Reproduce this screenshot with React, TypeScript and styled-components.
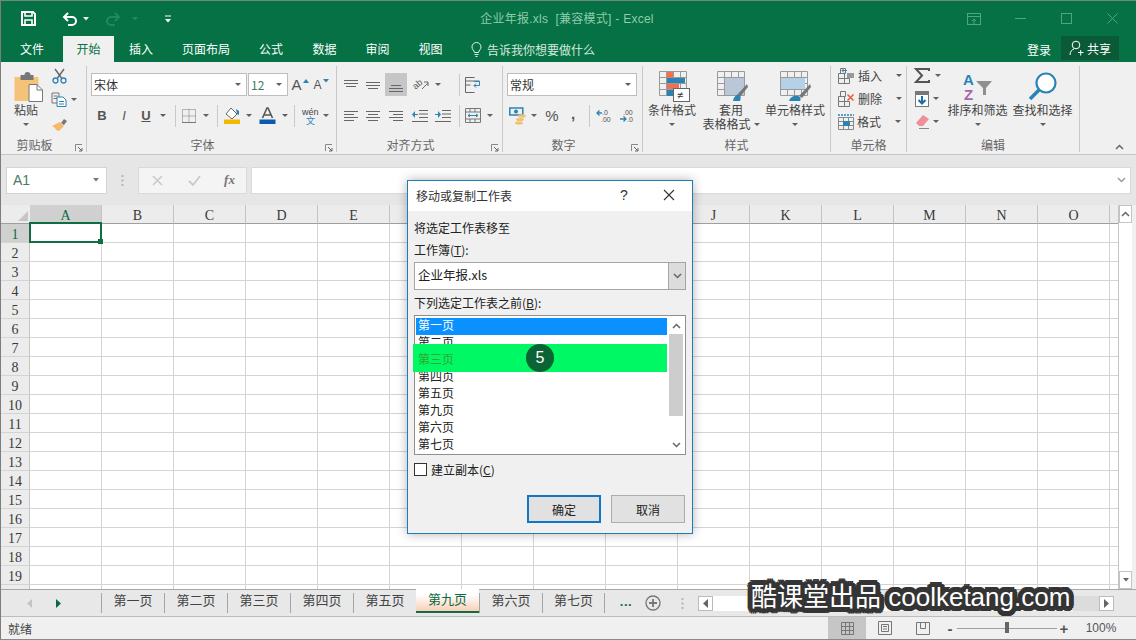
import { Fragment } from 'react';
import type { ReactNode } from 'react';
import styled, { createGlobalStyle } from 'styled-components';

const GlobalStyle = createGlobalStyle`
  html, body {
    margin: 0;
    padding: 0;
    overflow: hidden;
    background: #f0f0f0;
  }
  * { box-sizing: border-box; }
`;

const CJK = `"Noto Sans CJK SC", "Liberation Sans", sans-serif`;
const GREEN = '#057144';

const Window = styled.div`
  position: relative;
  width: 1136px;
  height: 640px;
  display: flex;
  flex-direction: column;
  overflow: hidden;
  font-family: ${CJK};
  font-size: 12px;
  color: #333;
  border-left: 1px solid #7d7d7d;
  border-bottom: 1px solid #8a8a8a;
`;

/* title bar */
const TitleBar = styled.div`
  height: 36px;
  flex: none;
  background: ${GREEN};
  border-top: 1px solid #6f8a7c;
  display: grid;
  grid-template-columns: 300px 1fr 300px;
  align-items: center;
`;
const QuickBar = styled.div`
  display: flex;
  align-items: center;
  padding-left: 19px;
`;
const QuickSlot = styled.span<{ $w: number }>`
  width: ${(p) => p.$w}px;
  display: flex;
  justify-content: center;
  align-items: center;
`;
const Title = styled.div`
  text-align: center;
  color: #8fcbab;
  font-size: 12px;
  padding: 0 3px 2px 0;
  white-space: pre;
  font-family: "Liberation Sans", ${CJK};
  letter-spacing: 0.26px;
`;
const WindowButtons = styled.div`
  display: flex;
  justify-content: flex-end;
  padding-right: 1px;
`;
const WindowButton = styled.span`
  width: 46px;
  display: flex;
  justify-content: center;
  align-items: center;
`;

/* tabs */
const TabBar = styled.div`
  height: 26px;
  flex: none;
  background: ${GREEN};
  display: flex;
  align-items: stretch;
`;
const Tab = styled.div<{ $w: number; $active?: boolean }>`
  width: ${(p) => p.$w}px;
  display: flex;
  align-items: center;
  justify-content: center;
  font-size: 12px;
  padding-bottom: 1px;
  color: ${(p) => (p.$active ? GREEN : '#ffffff')};
  background: ${(p) => (p.$active ? '#f0f0f0' : 'transparent')};
`;
const TellMe = styled.div`
  display: flex;
  align-items: center;
  gap: 5px;
  margin-left: 14px;
  color: #d5eadf;
  font-size: 12px;
`;
const TabSpacer = styled.div`
  flex: 1;
`;
const Login = styled.div`
  display: flex;
  align-items: center;
  color: #fff;
  margin-right: 10px;
`;
const ShareButton = styled.div`
  width: 58px;
  height: 24px;
  margin-right: 17px;
  background: #0b5a37;
  color: #fff;
  display: flex;
  align-items: center;
  justify-content: center;
  gap: 3px;
`;

/* ribbon */
const Ribbon = styled.div`
  height: 93px;
  flex: none;
  background: #f0f0f0;
  border-bottom: 1px solid #c6c6c6;
  display: flex;
  padding: 4px 0 2px;
`;
const Group = styled.div<{ $w: number; $plain?: boolean }>`
  position: relative;
  width: ${(p) => p.$w}px;
  flex: none;
  display: flex;
  flex-direction: column;
  border-right: ${(p) => (p.$plain ? 'none' : '1px solid #c9c9c9')};
`;
const GroupBody = styled.div<{ $pad?: number }>`
  height: 72px;
  display: flex;
  padding-left: ${(p) => p.$pad ?? 0}px;
`;
const Stack = styled.div`
  display: flex;
  flex-direction: column;
  gap: 8px;
  padding-top: 7px;
`;
const GroupLabel = styled.div<{ $launch?: boolean }>`
  height: 14px;
  line-height: 14px;
  text-align: center;
  color: #666;
  font-size: 12px;
  padding-right: ${(p) => (p.$launch ? 18 : 0)}px;
`;
const Launcher = styled.span`
  position: absolute;
  right: 3px;
  bottom: 0;
  display: flex;
`;
const ToolRow = styled.div`
  height: 23px;
  display: flex;
  align-items: center;
`;
const Slot = styled.span<{ $w: number; $on?: boolean }>`
  width: ${(p) => p.$w}px;
  height: 23px;
  flex: none;
  display: flex;
  align-items: center;
  justify-content: center;
  background: ${(p) => (p.$on ? '#c6c6c6' : 'transparent')};
`;
const Spacer = styled.span<{ $w: number }>`
  width: ${(p) => p.$w}px;
  flex: none;
`;
const VRule = styled.span`
  width: 1px;
  height: 22px;
  flex: none;
  background: #c9c9c9;
`;
const Caret = styled.span<{ $w?: number }>`
  width: ${(p) => p.$w ?? 6}px;
  flex: none;
  display: flex;
  justify-content: center;
  &::after {
    content: '';
    border: 3px solid transparent;
    border-top-color: #5f5f5f;
    border-bottom: none;
  }
`;
const Combo = styled.div<{ $w: number }>`
  width: ${(p) => p.$w}px;
  height: 23px;
  flex: none;
  background: #fff;
  border: 1px solid #bdbdbd;
  display: flex;
  align-items: center;
  justify-content: space-between;
  padding: 0 5px 1px 2px;
  font-size: 12px;
  color: #333;
  margin-right: 1px;
`;
const ComboValue = styled.span<{ $green?: boolean }>`
  color: ${(p) => (p.$green ? '#3c7a5c' : '#333')};
`;
const GlyphA = styled.span<{ $size: number }>`
  font-family: "Liberation Sans", sans-serif;
  font-size: ${(p) => p.$size}px;
  color: #555;
`;
const TriMark = styled.span`
  display: flex;
  align-self: flex-start;
  margin: 6px 0 0 1px;
`;
const FontBtn = styled.span<{ $under?: boolean; $italic?: boolean }>`
  font-family: "Liberation Sans", sans-serif;
  font-size: 13px;
  font-weight: ${(p) => (p.$italic ? 400 : 700)};
  font-style: ${(p) => (p.$italic ? 'italic' : 'normal')};
  text-decoration: ${(p) => (p.$under ? 'underline' : 'none')};
  color: #555;
`;
const BigButton = styled.div<{ $w: number }>`
  width: ${(p) => p.$w}px;
  flex: none;
  display: flex;
  flex-direction: column;
  align-items: center;
  padding-top: 4px;
  color: #444;
`;
const BigIcon = styled.div<{ $shift?: number }>`
  height: 33px;
  display: flex;
  align-items: center;
  justify-content: center;
  margin-left: ${(p) => p.$shift ?? 0}px;
`;
const BigText = styled.div`
  height: 14px;
  line-height: 14px;
  white-space: nowrap;
  display: flex;
  align-items: center;
  gap: 3px;
  font-size: 12px;
`;
const CaretLine = styled.div`
  height: 14px;
  display: flex;
  align-items: center;
`;
const ClipColumn = styled.div`
  display: flex;
  flex-direction: column;
  gap: 1px;
  margin-top: -2px;
`;
const CellColumn = styled.div<{ $pad?: number }>`
  display: flex;
  flex-direction: column;
  margin-top: -2px;
  padding-left: ${(p) => p.$pad ?? 0}px;
`;
const CellLabel = styled.span`
  margin-left: 3px;
  color: #444;
  width: 38px;
`;
const CollapseBox = styled.span`
  position: absolute;
  right: 11px;
  bottom: 2px;
  display: flex;
`;

/* formula row */
const FormulaRow = styled.div`
  height: 50px;
  flex: none;
  background: #e6e6e6;
  display: flex;
  align-items: center;
  padding: 0 5px;
`;
const NameBox = styled.div`
  width: 101px;
  height: 27px;
  background: #fff;
  border: 1px solid #d4d4d4;
  display: flex;
  align-items: center;
  justify-content: space-between;
  padding: 0 7px 0 6px;
  font-family: "Liberation Sans", sans-serif;
  font-size: 14px;
  color: #4a7a6a;
`;
const Dots = styled.span`
  width: 31px;
  display: flex;
  justify-content: center;
`;
const FxBox = styled.div`
  width: 109px;
  height: 27px;
  background: #f4f4f4;
  border: 1px solid #d9d9d9;
  display: grid;
  grid-template-columns: 37px 37px 33px;
  align-items: center;
  justify-items: center;
`;
const FormulaInput = styled.div`
  flex: 1;
  height: 27px;
  margin-left: 4px;
  background: #fff;
  border: 1px solid #d9d9d9;
  display: flex;
  align-items: center;
  justify-content: flex-end;
  padding-right: 4px;
`;

/* sheet */
const SheetArea = styled.div`
  flex: 1;
  min-height: 0;
  display: flex;
`;
const Cells = styled.div`
  flex: 1;
  min-width: 0;
  overflow: hidden;
  display: grid;
  grid-template-columns: 29px repeat(16, 72px);
  grid-auto-rows: 19px;
  background: #fff;
`;
const Corner = styled.div`
  background: #ececec;
  border-bottom: 1px solid #9f9f9f;
  display: flex;
  align-items: flex-end;
  justify-content: flex-end;
  padding: 0 2px 2px 0;
`;
const ColHead = styled.div<{ $active?: boolean }>`
  background: ${(p) => (p.$active ? '#d0d0d0' : '#ececec')};
  border-right: 1px solid #c4c4c4;
  border-bottom: 1px solid #9f9f9f;
  color: ${(p) => (p.$active ? '#0b6b40' : '#3a3a3a')};
  font-family: "Liberation Serif", serif;
  font-size: 14px;
  line-height: 21px;
  text-align: center;
`;
const RowHead = styled.div<{ $active?: boolean }>`
  background: ${(p) => (p.$active ? '#d0d0d0' : '#ececec')};
  border-right: 1px solid #c4c4c4;
  border-bottom: 1px solid #d4d4d4;
  color: ${(p) => (p.$active ? '#0b6b40' : '#3a3a3a')};
  font-family: "Liberation Serif", serif;
  font-size: 14px;
  padding-top: 2px;
  line-height: 18px;
  text-align: center;
`;
const Cell = styled.div<{ $active?: boolean }>`
  position: relative;
  border-right: 1px solid #d4d4d4;
  border-bottom: 1px solid #d4d4d4;
  ${(p) =>
    p.$active &&
    `
    z-index: 1;
    &::before {
      content: '';
      position: absolute;
      inset: -2px -1px -1px -1px;
      border: 2px solid #0f6f43;
    }
    &::after {
      content: '';
      position: absolute;
      right: -2px;
      bottom: -2px;
      width: 5px;
      height: 5px;
      background: #0f6f43;
    }
  `}
`;
const VScroll = styled.div`
  width: 18px;
  flex: none;
  background: #f0f0f0;
  display: flex;
  flex-direction: column;
  padding-right: 4px;
  border-left: 1px solid #c4c4c4;
`;
const VButton = styled.div`
  height: 18px;
  flex: none;
  background: #fff;
  border: 1px solid #c4c4c4;
  display: flex;
  align-items: center;
  justify-content: center;
`;
const VThumb = styled.div`
  flex: 1;
  background: #fff;
`;

/* sheet tabs */
const SheetBar = styled.div`
  height: 28px;
  flex: none;
  background: #e8e8e8;
  border-top: 1px solid #a8a8a8;
  border-bottom: 1px solid #bdbdbd;
  display: flex;
  align-items: flex-start;
`;
const NavArea = styled.div`
  width: 100px;
  height: 26px;
  display: flex;
  align-items: center;
  padding-left: 26px;
  gap: 24px;
`;
const SheetTab = styled.div<{ $active?: boolean; $last?: boolean }>`
  width: 63px;
  height: 20px;
  margin-top: ${(p) => (p.$active ? '-1px' : '3px')};
  flex: none;
  display: flex;
  align-items: center;
  justify-content: center;
  font-size: 13px;
  padding-bottom: ${(p) => (p.$active ? '3px' : '7px')};
  color: ${(p) => (p.$active ? '#0b6b40' : '#444')};
  border-left: ${(p) => (p.$active ? 'none' : '1px solid #a5a5a5')};
  border-right: ${(p) => (p.$last ? '1px solid #a5a5a5' : 'none')};
  ${(p) =>
    p.$active
      ? `height: 24px;
         background: linear-gradient(#ffffff 25%, #f9cfb8 100%);
         border-bottom: 2px solid #0f6f43;`
      : ''}
`;
const BarTools = styled.div`
  height: 26px;
  display: flex;
  align-items: center;
`;
const MoreDots = styled.span`
  width: 40px;
  margin-left: 0;
  text-align: center;
  color: #0f6f43;
  font-weight: 700;
  font-family: "Liberation Sans", sans-serif;
  font-size: 13px;
  letter-spacing: 0.5px;
  padding: 0 0 3px 2px;
`;
const HScroll = styled.div`
  width: 416px;
  height: 15px;
  margin-left: 14px;
  display: flex;
  background: #dcdcdc;
`;
const HArrow = styled.div`
  width: 15px;
  flex: none;
  background: #fff;
  border: 1px solid #bcbcbc;
  display: flex;
  align-items: center;
  justify-content: center;
`;
const HThumb = styled.div`
  width: 360px;
  background: #fff;
`;
const HFill = styled.div`
  flex: 1;
`;

/* status */
const StatusBar = styled.div`
  height: 22px;
  flex: none;
  background: #f0f0f0;
  display: flex;
  align-items: stretch;
  justify-content: space-between;
  padding: 0 11px 0 7px;
`;
const StatusText = styled.div`
  display: flex;
  align-items: center;
  color: #444;
`;
const StatusRight = styled.div`
  display: flex;
  align-items: stretch;
`;
const ViewButton = styled.div<{ $on?: boolean }>`
  width: 38px;
  background: ${(p) => (p.$on ? '#c6c6c6' : 'transparent')};
  display: flex;
  align-items: center;
  justify-content: center;
`;
const ZoomWrap = styled.div`
  display: flex;
  align-items: center;
  margin-left: 3px;
  color: #555;
`;
const ZoomTrack = styled.div`
  position: relative;
  width: 100px;
  height: 1px;
  margin: 0 2px;
  background: #a0a0a0;
`;
const ZoomThumb = styled.span`
  position: absolute;
  left: 48px;
  top: -6px;
  width: 4px;
  height: 11px;
  background: #666;
`;
const ZoomSign = styled.span`
  font-family: "Liberation Sans", sans-serif;
  font-size: 15px;
  font-weight: 700;
  width: 10px;
  text-align: center;
`;
const ZoomValue = styled.span`
  width: 48px;
  margin-left: 8px;
  font-family: "Liberation Sans", sans-serif;
  font-size: 12px;
  text-align: center;
`;

/* dialog */
const Dialog = styled.div`
  position: absolute;
  left: 406px;
  top: 180px;
  width: 286px;
  height: 354px;
  background: #f0f0f0;
  border: 1px solid #1b7cbe;
  box-shadow: 0 0 10px rgba(0, 0, 0, 0.3);
  color: #222;
  display: flex;
  flex-direction: column;
  z-index: 5;
`;
const DialogHead = styled.div`
  height: 30px;
  flex: none;
  background: #fff;
  display: flex;
  align-items: center;
  padding: 0 0 2px 8px;
  color: #333;
`;
const DialogTitle = styled.span`
  flex: 1;
`;
const HelpMark = styled.span`
  width: 24px;
  font-family: "Liberation Sans", sans-serif;
  font-size: 14px;
  text-align: center;
  margin-right: 21px;
`;
const CloseMark = styled.span`
  width: 24px;
  margin-right: 11px;
  display: flex;
  justify-content: center;
`;
const DialogBody = styled.div`
  flex: 1;
  padding: 8px 6px 0;
  display: flex;
  flex-direction: column;
`;
const FieldLabel = styled.div<{ $top?: number }>`
  height: 18px;
  line-height: 18px;
  margin-top: ${(p) => p.$top ?? 0}px;
`;
const U = styled.span`
  text-decoration: underline;
`;
const BookCombo = styled.div`
  height: 28px;
  margin-top: 3px;
  background: #fff;
  border: 1px solid #a5a5a5;
  display: flex;
  align-items: stretch;
  justify-content: space-between;
  font-size: 12.5px;
`;
const BookName = styled.span`
  display: flex;
  align-items: center;
  padding: 0 0 3px 3px;
`;
const BookArrow = styled.span`
  width: 18px;
  background: #dcdcdc;
  border: 1px solid #a5a5a5;
  margin: -1px;
  display: flex;
  align-items: center;
  justify-content: center;
`;
const ListBox = styled.div`
  height: 140px;
  margin-top: 3px;
  background: #fff;
  border: 1px solid #8f8f8f;
  display: flex;
  padding: 2px 1px 1px;
`;
const ListItems = styled.div`
  flex: 1;
`;
const ListItem = styled.div<{ $sel?: boolean; $lit?: boolean }>`
  position: relative;
  z-index: ${(p) => (p.$lit ? 2 : 0)};
  height: 17px;
  line-height: 14px;
  padding-left: 2px;
  background: ${(p) => (p.$sel ? '#0a90ff' : 'transparent')};
  color: ${(p) => (p.$sel ? '#fff' : p.$lit ? '#2fa82f' : '#222')};
`;
const ListScroll = styled.div`
  width: 17px;
  flex: none;
  margin-top: -1px;
  display: flex;
  flex-direction: column;
  padding-left: 1px;
`;
const ListArrow = styled.div`
  height: 17px;
  flex: none;
  display: flex;
  align-items: center;
  justify-content: center;
`;
const ListThumb = styled.div`
  height: 82px;
  flex: none;
  background: #cdcdcd;
  margin: 0 1px;
`;
const ListGap = styled.div`
  flex: 1;
`;
const CheckRow = styled.div`
  display: flex;
  align-items: center;
  gap: 4px;
  margin-top: 8px;
  height: 13px;
`;
const CheckBox = styled.span`
  width: 13px;
  height: 13px;
  background: #fff;
  border: 1px solid #333;
`;
const ButtonRow = styled.div`
  display: flex;
  justify-content: flex-end;
  gap: 10px;
  margin-top: 19px;
  padding-right: 1px;
`;
const DialogButton = styled.div<{ $primary?: boolean }>`
  width: 74px;
  height: 28px;
  background: #e1e1e1;
  border: ${(p) => (p.$primary ? '2px solid #1177c4' : '1px solid #adadad')};
  display: flex;
  align-items: center;
  justify-content: center;
  color: #222;
`;
const Highlight = styled.div`
  position: absolute;
  z-index: 1;
  left: 5px;
  top: 163px;
  width: 254px;
  height: 28px;
  background: #00f864;
`;
const StepBadge = styled.div`
  position: absolute;
  z-index: 3;
  left: 118px;
  top: 163px;
  width: 28px;
  height: 28px;
  border-radius: 50%;
  background: #0b6433;
  color: #fff;
  font-family: "Liberation Sans", sans-serif;
  font-size: 16px;
  display: flex;
  align-items: center;
  justify-content: center;
`;

const ringShadow = (r: number, color: string) =>
  Array.from({ length: 16 }, (_, i) => {
    const a = (i / 16) * Math.PI * 2;
    return `${(Math.cos(a) * r).toFixed(1)}px ${(Math.sin(a) * r).toFixed(1)}px 0 ${color}`;
  }).join(', ');

const Watermark = styled.div`
  position: absolute;
  left: 750px;
  top: 579px;
  z-index: 6;
  white-space: pre;
  color: #fff;
  font-size: 26px;
  line-height: 36px;
  font-family: "Liberation Sans", ${CJK};
  text-shadow: ${ringShadow(5, '#343434')}, ${ringShadow(3, '#343434')}, ${ringShadow(1.5, '#343434')};
`;

/* drawings */
const I = ({ w, h, children }: { w: number; h: number; children: ReactNode }) => (
  <svg width={w} height={h} viewBox={`0 0 ${w} ${h}`} fill="none" overflow="visible">
    {children}
  </svg>
);

const SaveIcon = () => (
  <I w={15} h={15}>
    <path d="M1 1h11l2 2v11H1z" stroke="#fff" strokeWidth="2" />
    <path d="M4 1v4h7V1M4 14V9h7v5" stroke="#fff" strokeWidth="1.6" />
  </I>
);
const UndoIcon = ({ color }: { color: string }) => (
  <I w={16} h={14}>
    <path d="M2 5h8a4 4 0 0 1 0 8H6" stroke={color} strokeWidth="2" />
    <path d="M6 1L2 5l4 4" stroke={color} strokeWidth="2" />
  </I>
);
const RedoIcon = ({ color }: { color: string }) => (
  <I w={16} h={14}>
    <path d="M14 5H6a4 4 0 0 0 0 8h4" stroke={color} strokeWidth="2" />
    <path d="M10 1l4 4-4 4" stroke={color} strokeWidth="2" />
  </I>
);
const SmallCaret = ({ color }: { color: string }) => (
  <I w={6} h={4}>
    <path d="M0 0h6L3 3.5z" fill={color} />
  </I>
);
const QatMore = () => (
  <I w={6} h={8}>
    <path d="M0 1h6" stroke="#fff" />
    <path d="M0 4h6L3 7.5z" fill="#fff" />
  </I>
);
const WinRibbon = () => (
  <I w={14} h={12}>
    <rect x=".5" y=".5" width="13" height="11" stroke="#4fa580" />
    <path d="M.5 3.5h13M5 8l2-2 2 2M7 6v5" stroke="#4fa580" />
  </I>
);
const WinMin = () => (
  <I w={11} h={11}>
    <path d="M0 5.5h11" stroke="#4fa580" />
  </I>
);
const WinMax = () => (
  <I w={11} h={11}>
    <rect x=".5" y=".5" width="10" height="10" stroke="#4fa580" />
  </I>
);
const WinClose = () => (
  <I w={11} h={11}>
    <path d="M.5.5l10 10M10.500.5l-10 10" stroke="#4fa580" />
  </I>
);
const Bulb = () => (
  <I w={11} h={15}>
    <path d="M3.500 10.500C3 8 1 7.500 1 5a4.500 4.500 0 0 1 9 0c0 2.500-2 3-2.500 5.500z" stroke="#e4f2ea" />
    <path d="M3.500 12.500h4M4.500 14.500h2" stroke="#e4f2ea" />
  </I>
);
const Person = () => (
  <I w={15} h={16}>
    <circle cx="7" cy="5" r="3.800" stroke="#fff" />
    <path d="M1 15c0-3.500 2-5.500 4-6M9 12.500h5.500M11.700 10v5.500" stroke="#fff" />
  </I>
);
const PasteIcon = () => (
  <I w={33} h={30}>
    <g transform="translate(4.500 0)">
      <path d="M0 5h24v24H0z" fill="#f5c27a" />
      <path d="M6 3h4a3 3 0 0 1 6 0h3v5H6z" fill="#777" />
      <path d="M14.500 12.500h8l5.500 5.500v11.500H14.500z" fill="#fff" stroke="#777" />
      <path d="M22.500 12.500V18H28" stroke="#777" />
    </g>
  </I>
);
const CutIcon = () => (
  <I w={15} h={16}>
    <path d="M3 1l6.500 9M12 1L5.500 10" stroke="#666" strokeWidth="1.400" />
    <circle cx="3.500" cy="12.500" r="2.500" stroke="#2b83b5" strokeWidth="1.300" />
    <circle cx="11.500" cy="12.500" r="2.500" stroke="#2b83b5" strokeWidth="1.300" />
  </I>
);
const CopyIcon = () => (
  <I w={16} h={15}>
    <path d="M1 1h7l0 10H1zM2.500 4h4M2.500 6.500h4" stroke="#777" />
    <path d="M6 5h6l3 3v6.500H6z" fill="#fff" stroke="#2b83b5" />
    <path d="M8 9.500h5M8 12h5" stroke="#2b83b5" />
  </I>
);
const BrushIcon = () => (
  <I w={17} h={14}>
    <path d="M10 6l3-4 3 2-3 4z" fill="#777" />
    <path d="M1 9l8-4 4 4-5 5-3-1-1-2z" fill="#f5b96d" />
  </I>
);
const SmallTri = ({ color }: { color: string }) => (
  <I w={6} h={4}>
    <path d="M3 0l3 4H0z" fill={color} />
  </I>
);
const BorderIcon = () => (
  <I w={14} h={14}>
    <path d="M.5.5h13v13H.5zM7 .5v13M.5 7h13" stroke="#777" strokeDasharray="1 1" />
    <path d="M0 13.500h14" stroke="#777" />
  </I>
);
const FillIcon = () => (
  <I w={17} h={17}>
    <path d="M7 1l6 6-5 5-6-5z" fill="#fff" stroke="#666" />
    <path d="M12 2l3 2v4l-2-1z" fill="#2b83b5" />
    <rect x="0" y="12.500" width="16" height="4.500" fill="#f2b800" />
  </I>
);
const FontColorIcon = () => (
  <I w={17} h={17}>
    <path d="M3.500 11L8 1h1l4.500 10M5.500 8h6" stroke="#555" strokeWidth="1.600" />
    <rect x="0.500" y="12.500" width="16" height="4.500" fill="#0b5cad" />
  </I>
);
const WenIcon = () => (
  <I w={18} h={18}>
    <text x="0" y="8" fontSize="9" fill="#444" fontFamily="Liberation Sans">wén</text>
    <text x="4" y="17" fontSize="9" fill="#2b83b5" fontFamily="Noto Sans CJK SC">文</text>
  </I>
);
const Lines = ({ ys, xs }: { ys: number[]; xs: [number, number][] }) => (
  <I w={14} h={14}>
    {ys.map((y, i) => (
      <path key={y} d={`M${xs[i][0]} ${y}.5H${xs[i][1]}`} stroke="#666" />
    ))}
  </I>
);
const OrientIcon = () => (
  <I w={16} h={15}>
    <text x="0" y="10" fontSize="9" fill="#555" fontFamily="Liberation Sans" transform="rotate(-40 5 8)">ab</text>
    <path d="M9 12l6-6M11 5h4v4" stroke="#666" />
  </I>
);
const IndentIcon = ({ flip }: { flip?: boolean }) => (
  <I w={16} h={12}>
    <path d="M7 .5h9M7 4h9M7 7.500h9M0 11.500h16" stroke="#666" />
    <path d={flip ? 'M0 4h3V1l3 3.500L3 8V5H0z' : 'M6 4H3V1L0 4.500 3 8V5h3z'} fill="#2b83b5" />
  </I>
);
const WrapIcon = () => (
  <I w={16} h={16}>
    <path d="M.5.5h9M.5 4h14M.5 8h5M.5 15.500h9M.5.5v15" stroke="#666" />
    <path d="M9 4.500h5.500v4H9M9 8.500l2-2M9 8.500l2 2" stroke="#2b83b5" />
  </I>
);
const MergeIcon = () => (
  <I w={16} h={15}>
    <path d="M.5.5h15v14H.5zM.5 4h15M.5 11h15M5 .5V4M10 .5V4M5 11v3.500M10 11v3.500" stroke="#777" />
    <path d="M3 7.500h10M3 7.500l2-1.500M3 7.500L5 9M13 7.500L11 6M13 7.500L11 9" stroke="#2b83b5" />
  </I>
);
const CurrencyIcon = () => (
  <I w={18} h={18}>
    <rect x=".8" y="1" width="13" height="7" stroke="#2b83b5" strokeWidth="1.500" />
    <circle cx="7" cy="4.500" r="2" fill="#2b83b5" />
    <ellipse cx="13" cy="9" rx="4" ry="1.700" fill="#efc276" />
    <ellipse cx="11" cy="12.500" rx="4" ry="1.700" fill="#efc276" />
    <ellipse cx="10" cy="16" rx="4" ry="1.700" fill="#efc276" />
  </I>
);
const PercentMark = styled.span`
  font-family: "Liberation Sans", sans-serif;
  font-size: 15px;
  color: #555;
`;
const CommaMark = styled.span`
  font-family: "Liberation Sans", sans-serif;
  font-size: 15px;
  font-weight: 700;
  color: #555;
  padding-bottom: 5px;
`;
const DecIcon = ({ flip }: { flip?: boolean }) => (
  <I w={16} h={14}>
    <text x={flip ? 4 : 6} y="6" fontSize="7" fill="#555" fontFamily="Liberation Sans">{flip ? '.00' : '.0'}</text>
    <text x={flip ? 8 : 5} y="13" fontSize="7" fill="#555" fontFamily="Liberation Sans">{flip ? '.0' : '.00'}</text>
    {flip ? (
      <path d="M1 10h6M4.500 7.500L7 10l-2.500 2.500" stroke="#2b83b5" strokeWidth="1.300" />
    ) : (
      <path d="M6 4H1M3.500 1.500L1 4l2.500 2.500" stroke="#2b83b5" strokeWidth="1.300" />
    )}
  </I>
);
const GridBase = () => (
  <path
    d="M.5.5h27v24H.5zM.5 6.500h27M.5 12.500h27M.5 18.500h27M7.500.5v24M14.500.5v24M21.500.5v24"
    stroke="#9a9a9a"
  />
);
const CondIcon = () => (
  <I w={31} h={31}>
    <GridBase />
    <rect x="8" y="1" width="6" height="6" fill="#f0704f" />
    <rect x="8" y="7" width="18" height="5" fill="#2b83b5" />
    <rect x="8" y="13" width="12" height="5" fill="#f0704f" />
    <rect x="8" y="19" width="6" height="6" fill="#2b83b5" />
    <rect x="14.500" y="17.500" width="16" height="13" fill="#fff" stroke="#666" />
    <text x="18" y="28" fontSize="11" fill="#333" fontFamily="Liberation Sans">≠</text>
  </I>
);
const TableStyleIcon = () => (
  <I w={31} h={31}>
    <GridBase />
    <rect x="8" y="7" width="19" height="17" fill="#b9c7d8" />
    <path d="M30 13L19 25l3 2 9-11z" fill="#777" />
    <path d="M16 30c1-5 3-6 6-6 2 1 2 3 1 6z" fill="#2b83b5" />
  </I>
);
const CellStyleIcon = () => (
  <I w={31} h={31}>
    <GridBase />
    <rect x="1" y="7" width="24" height="11" fill="#b6d0e6" />
    <path d="M30 13L19 25l3 2 9-11z" fill="#777" />
    <path d="M9 30c1-4 5-6 9-5 3 1 3 3 2 5z" fill="#2b83b5" />
  </I>
);
const CellInsert = () => (
  <I w={17} h={16}>
    <path d="M.5 5.500h6v5h-6zM.5 10.500h6v5h-6zM6.500 10.500h5v5h-5zM2.500.5h5v5h-5z" stroke="#777" />
    <rect x="9" y="5" width="7" height="5" fill="#999" />
    <path d="M9 2.500H4M4 2.500l2-2M4 2.500l2 2" stroke="#2b83b5" />
  </I>
);
const CellDelete = () => (
  <I w={17} h={16}>
    <path d="M.5 5.500h6v5h-6zM.5 10.500h6v5h-6zM6.500 10.500h5v5h-5zM2.500.5h5v5h-5z" stroke="#777" />
    <path d="M9.500 3.500l6 6M15.500 3.500l-6 6" stroke="#ea5a3c" strokeWidth="1.500" />
  </I>
);
const CellFormat = () => (
  <I w={16} h={16}>
    <path d="M.5 3.500h15v12H.5zM.5 7.500h15M.5 11.500h15M5.500 3.500v12M10.500 3.500v12" stroke="#888" />
    <rect x="5" y="7" width="7" height="5" fill="#2b83b5" />
    <path d="M0 1h16" stroke="#2b83b5" strokeDasharray="2 1" strokeWidth="1.500" />
  </I>
);
const SigmaIcon = () => (
  <I w={16} h={15}>
    <path d="M15 3V1H2l6 6.500L2 14h13v-2" stroke="#555" strokeWidth="2" />
  </I>
);
const FillDown = () => (
  <I w={14} h={16}>
    <rect x=".5" y=".5" width="13" height="15" fill="#fff" stroke="#777" />
    <rect x="0" y="0" width="14" height="4" fill="#777" />
    <path d="M7 5v7M3.500 9L7 12.500 10.500 9" stroke="#1b6fa8" strokeWidth="2" />
  </I>
);
const Eraser = () => (
  <I w={15} h={15}>
    <path d="M1 9l7-8 6 4-6 7H4z" fill="#f08f9a" />
    <path d="M4 14.500h10" stroke="#888" />
  </I>
);
const SortIcon = () => (
  <I w={30} h={29}>
    <text x="0" y="13" fontSize="15" fontWeight="700" fill="#2b83b5" fontFamily="Liberation Sans">A</text>
    <text x="1" y="28" fontSize="15" fontWeight="700" fill="#a765ad" fontFamily="Liberation Sans">Z</text>
    <path d="M13 9h16l-6 7v7h-3v-7z" fill="#8f8f8f" />
  </I>
);
const FindIcon = () => (
  <I w={29} h={29}>
    <circle cx="18" cy="11" r="9.500" stroke="#2b83b5" strokeWidth="2.200" fill="#fff" />
    <path d="M11 18L2 27" stroke="#2b83b5" strokeWidth="3.600" />
  </I>
);
const LaunchIcon = () => (
  <I w={8} h={8}>
    <path d="M.5 7V.5H7" stroke="#888" />
    <path d="M3 3l4 4M7 4v3H4" stroke="#666" />
  </I>
);
const ChevronUp = () => (
  <I w={9} h={6}>
    <path d="M1 5l3.500-3.500L8 5" stroke="#666" strokeWidth="1.500" />
  </I>
);
const ChevronDown = ({ color = '#666' }: { color?: string }) => (
  <I w={9} h={6}>
    <path d="M1 1l3.500 3.500L8 1" stroke={color} strokeWidth="1.500" />
  </I>
);
const DotRail = () => (
  <I w={3} h={11}>
    <path d="M1.500 0v2M1.500 4.500v2M1.500 9v2" stroke="#b5b5b5" strokeWidth="2" />
  </I>
);
const CrossIcon = () => (
  <I w={11} h={11}>
    <path d="M1 1l9 9M10 1l-9 9" stroke="#c9c9c9" strokeWidth="1.500" />
  </I>
);
const CheckIcon = () => (
  <I w={13} h={11}>
    <path d="M1 6l4 4 7-9" stroke="#c9c9c9" strokeWidth="1.800" />
  </I>
);
const FxMark = styled.span`
  font-family: "Liberation Serif", serif;
  font-style: italic;
  font-weight: 700;
  font-size: 13px;
  color: #777;
`;
const CornerTri = () => (
  <I w={10} h={10}>
    <path d="M10 0v10H0z" fill="#c5c5c5" />
  </I>
);
const NavArrow = ({ color, left }: { color: string; left?: boolean }) => (
  <I w={5} h={9}>
    <path d={left ? 'M5 0v9L0 4.500z' : 'M0 0v9l5-4.500z'} fill={color} />
  </I>
);
const PlusCircle = () => (
  <I w={16} h={16}>
    <circle cx="8" cy="8" r="7" stroke="#777" strokeWidth="1.300" />
    <path d="M4 8h8M8 4v8" stroke="#777" strokeWidth="1.800" />
  </I>
);
const NormalView = () => (
  <I w={13} h={13}>
    <path d="M.5.5h12v12H.5zM4.500.5v12M8.500.5v12M.5 4.500h12M.5 8.500h12" stroke="#777" />
  </I>
);
const LayoutView = () => (
  <I w={14} h={14}>
    <path d="M.5.5h13v13H.5z" stroke="#777" />
    <path d="M3.500 3.500h7v7h-7zM5 5.500h4M5 8h4" stroke="#777" />
  </I>
);
const BreakView = () => (
  <I w={14} h={13}>
    <path d="M.5.5h13v12H.5zM4.500.5v6h5v-6" stroke="#777" />
  </I>
);
const XMark = () => (
  <I w={12} h={12}>
    <path d="M1 1l10 10M11 1L1 11" stroke="#333" strokeWidth="1.100" />
  </I>
);

const TABS = [
  { label: '文件', w: 62 },
  { label: '开始', w: 51, active: true },
  { label: '插入', w: 54 },
  { label: '页面布局', w: 76 },
  { label: '公式', w: 54 },
  { label: '数据', w: 53 },
  { label: '审阅', w: 53 },
  { label: '视图', w: 53 },
];
// the sixteenth column only shows a sliver before the scrollbar, so no letter
const COLUMNS = [...'ABCDEFGHIJKLMNO'.split(''), ''];
const ROWS = Array.from({ length: 20 }, (_, i) => i + 1);
const SHEETS = ['第一页', '第二页', '第三页', '第四页', '第五页', '第九页', '第六页', '第七页'];

const App = () => (
  <>
    <GlobalStyle />
    <Window>
      <TitleBar>
        <QuickBar>
          <QuickSlot $w={16}><SaveIcon /></QuickSlot>
          <Spacer $w={26} />
          <QuickSlot $w={16}><UndoIcon color="#fff" /></QuickSlot>
          <Spacer $w={5} />
          <QuickSlot $w={6}><SmallCaret color="#e8f3ed" /></QuickSlot>
          <Spacer $w={16} />
          <QuickSlot $w={16}><RedoIcon color="#1f8a62" /></QuickSlot>
          <Spacer $w={11} />
          <QuickSlot $w={6}><SmallCaret color="#1f8a62" /></QuickSlot>
          <Spacer $w={27} />
          <QuickSlot $w={6}><QatMore /></QuickSlot>
        </QuickBar>
        <Title>企业年报.xls  [兼容模式] - Excel</Title>
        <WindowButtons>
          <WindowButton><WinRibbon /></WindowButton>
          <WindowButton><WinMin /></WindowButton>
          <WindowButton><WinMax /></WindowButton>
          <WindowButton><WinClose /></WindowButton>
        </WindowButtons>
      </TitleBar>

      <TabBar>
        {TABS.map((t) => (
          <Tab key={t.label} $w={t.w} $active={t.active}>{t.label}</Tab>
        ))}
        <TellMe><Bulb />告诉我你想要做什么</TellMe>
        <TabSpacer />
        <Login>登录</Login>
        <ShareButton><Person />共享</ShareButton>
      </TabBar>

      <Ribbon>
        <Group $w={86}>
          <GroupBody $pad={2}>
            <BigButton $w={46}>
              <BigIcon><PasteIcon /></BigIcon>
              <BigText>粘贴</BigText>
              <CaretLine><Caret /></CaretLine>
            </BigButton>
            <ClipColumn>
              <ToolRow><Slot $w={20}><CutIcon /></Slot></ToolRow>
              <ToolRow><Slot $w={20}><CopyIcon /></Slot><Spacer $w={2} /><Caret /></ToolRow>
              <ToolRow><Slot $w={20}><BrushIcon /></Slot></ToolRow>
            </ClipColumn>
          </GroupBody>
          <GroupLabel $launch>剪贴板</GroupLabel>
          <Launcher><LaunchIcon /></Launcher>
        </Group>

        <Group $w={250}>
          <GroupBody $pad={4}>
            <Stack>
              <ToolRow>
                <Combo $w={156}>
                  <ComboValue>宋体</ComboValue>
                  <Caret />
                </Combo>
                <Combo $w={40}>
                  <ComboValue $green>12</ComboValue>
                  <Caret />
                </Combo>
                <Slot $w={22}>
                  <GlyphA $size={15}>A</GlyphA>
                  <TriMark><SmallTri color="#2b83b5" /></TriMark>
                </Slot>
                <Slot $w={20}>
                  <GlyphA $size={12}>A</GlyphA>
                  <TriMark><SmallCaret color="#2b83b5" /></TriMark>
                </Slot>
              </ToolRow>
              <ToolRow>
                <Slot $w={22}><FontBtn>B</FontBtn></Slot>
                <Slot $w={22}><FontBtn $italic>I</FontBtn></Slot>
                <Slot $w={22}><FontBtn $under>U</FontBtn></Slot>
                <Caret $w={12} />
                <Spacer $w={6} />
                <VRule />
                <Slot $w={26}><BorderIcon /></Slot>
                <Caret $w={8} />
                <Spacer $w={7} />
                <VRule />
                <Slot $w={28}><FillIcon /></Slot>
                <Caret />
                <Slot $w={30}><FontColorIcon /></Slot>
                <Caret />
                <Spacer $w={6} />
                <VRule />
                <Spacer $w={4} />
                <Slot $w={24}><WenIcon /></Slot>
                <Caret />
              </ToolRow>
            </Stack>
          </GroupBody>
          <GroupLabel $launch>字体</GroupLabel>
          <Launcher><LaunchIcon /></Launcher>
        </Group>

        <Group $w={166}>
          <GroupBody $pad={3}>
            <Stack>
              <ToolRow>
                <Slot $w={22}><Lines ys={[2, 5, 8]} xs={[[0, 14], [0, 14], [2, 12]]} /></Slot>
                <Slot $w={22}><Lines ys={[4, 7, 10]} xs={[[0, 14], [0, 14], [2, 12]]} /></Slot>
                <Spacer $w={1} />
                <Slot $w={22} $on><Lines ys={[7, 10, 13]} xs={[[2, 12], [0, 14], [0, 14]]} /></Slot>
                <Slot $w={28}><OrientIcon /></Slot>
                <Caret />
                <Spacer $w={18} />
                <VRule />
                <Slot $w={26}><WrapIcon /></Slot>
              </ToolRow>
              <ToolRow>
                <Slot $w={22}><Lines ys={[2, 5, 8, 11]} xs={[[0, 14], [0, 10], [0, 14], [0, 10]]} /></Slot>
                <Slot $w={22}><Lines ys={[2, 5, 8, 11]} xs={[[0, 14], [2, 12], [0, 14], [2, 12]]} /></Slot>
                <Spacer $w={1} />
                <Slot $w={22}><Lines ys={[2, 5, 8, 11]} xs={[[0, 14], [4, 14], [0, 14], [4, 14]]} /></Slot>
                <Slot $w={25}><IndentIcon /></Slot>
                <Slot $w={22}><IndentIcon flip /></Slot>
                <Spacer $w={5} />
                <VRule />
                <Slot $w={26}><MergeIcon /></Slot>
                <Caret $w={8} />
              </ToolRow>
            </Stack>
          </GroupBody>
          <GroupLabel $launch>对齐方式</GroupLabel>
          <Launcher><LaunchIcon /></Launcher>
        </Group>

        <Group $w={140}>
          <GroupBody $pad={4}>
            <Stack>
              <ToolRow>
                <Combo $w={130}>
                  <ComboValue>常规</ComboValue>
                  <Caret />
                </Combo>
              </ToolRow>
              <ToolRow>
                <Slot $w={22}><CurrencyIcon /></Slot>
                <Caret $w={10} />
                <Slot $w={26}><PercentMark>%</PercentMark></Slot>
                <Slot $w={16}><CommaMark>,</CommaMark></Slot>
                <Spacer $w={8} />
                <VRule />
                <Slot $w={28}><DecIcon /></Slot>
                <Slot $w={18}><DecIcon flip /></Slot>
              </ToolRow>
            </Stack>
          </GroupBody>
          <GroupLabel $launch>数字</GroupLabel>
          <Launcher><LaunchIcon /></Launcher>
        </Group>

        <Group $w={188}>
          <GroupBody>
            <BigButton $w={58}>
              <BigIcon $shift={4}><CondIcon /></BigIcon>
              <BigText>条件格式</BigText>
              <CaretLine><Caret /></CaretLine>
            </BigButton>
            <BigButton $w={60}>
              <BigIcon $shift={3}><TableStyleIcon /></BigIcon>
              <BigText>套用</BigText>
              <BigText>表格格式<Caret /></BigText>
            </BigButton>
            <BigButton $w={68}>
              <BigIcon><CellStyleIcon /></BigIcon>
              <BigText>单元格样式</BigText>
              <CaretLine><Caret /></CaretLine>
            </BigButton>
          </GroupBody>
          <GroupLabel>样式</GroupLabel>
        </Group>

        <Group $w={76}>
          <GroupBody>
            <CellColumn $pad={7}>
              <ToolRow><CellInsert /><CellLabel>插入</CellLabel><Caret /></ToolRow>
              <ToolRow><CellDelete /><CellLabel>删除</CellLabel><Caret /></ToolRow>
              <ToolRow><CellFormat /><CellLabel>格式</CellLabel><Caret /></ToolRow>
            </CellColumn>
          </GroupBody>
          <GroupLabel>单元格</GroupLabel>
        </Group>

        <Group $w={173}>
          <GroupBody $pad={6}>
            <CellColumn>
              <ToolRow><Slot $w={18}><SigmaIcon /></Slot><Spacer $w={4} /><Caret /></ToolRow>
              <ToolRow><Slot $w={18}><FillDown /></Slot><Spacer $w={2} /><Caret /></ToolRow>
              <ToolRow><Slot $w={18}><Eraser /></Slot><Spacer $w={2} /><Caret /></ToolRow>
            </CellColumn>
            <Spacer $w={4} />
            <BigButton $w={65}>
              <BigIcon><SortIcon /></BigIcon>
              <BigText>排序和筛选</BigText>
              <CaretLine><Caret /></CaretLine>
            </BigButton>
            <BigButton $w={65}>
              <BigIcon><FindIcon /></BigIcon>
              <BigText>查找和选择</BigText>
              <CaretLine><Caret /></CaretLine>
            </BigButton>
          </GroupBody>
          <GroupLabel>编辑</GroupLabel>
        </Group>

        <Group $w={55} $plain>
          <CollapseBox><ChevronUp /></CollapseBox>
        </Group>
      </Ribbon>

      <FormulaRow>
        <NameBox>A1<SmallCaret color="#777" /></NameBox>
        <Dots><DotRail /></Dots>
        <FxBox>
          <CrossIcon />
          <CheckIcon />
          <FxMark>fx</FxMark>
        </FxBox>
        <FormulaInput><ChevronDown color="#9a9a9a" /></FormulaInput>
      </FormulaRow>

      <SheetArea>
        <Cells>
          <Corner><CornerTri /></Corner>
          {COLUMNS.map((c, i) => (
            <ColHead key={i} $active={i === 0}>{c}</ColHead>
          ))}
          {ROWS.map((r) => (
            <Fragment key={r}>
              <RowHead $active={r === 1}>{r < 20 ? r : ''}</RowHead>
              {COLUMNS.map((_, i) => (
                <Cell key={i} $active={r === 1 && i === 0} />
              ))}
            </Fragment>
          ))}
        </Cells>
        <VScroll>
          <VButton><ChevronUp /></VButton>
          <VThumb />
          <VButton><SmallCaret color="#666" /></VButton>
        </VScroll>
      </SheetArea>

      <SheetBar>
        <NavArea>
          <NavArrow color="#c4c4c4" left />
          <NavArrow color="#0b6b40" />
        </NavArea>
        {SHEETS.map((s, i) => (
          <SheetTab key={s} $active={i === 5} $last={i === 7}>{s}</SheetTab>
        ))}
        <BarTools>
          <MoreDots>...</MoreDots>
          <PlusCircle />
          <Spacer $w={20} />
          <DotRail />
          <HScroll>
            <HArrow><NavArrow color="#666" left /></HArrow>
            <HThumb />
            <HFill />
            <HArrow><NavArrow color="#666" /></HArrow>
          </HScroll>
        </BarTools>
      </SheetBar>

      <StatusBar>
        <StatusText>就绪</StatusText>
        <StatusRight>
          <ViewButton $on><NormalView /></ViewButton>
          <ViewButton><LayoutView /></ViewButton>
          <ViewButton><BreakView /></ViewButton>
          <ZoomWrap>
            <ZoomSign>-</ZoomSign>
            <ZoomTrack><ZoomThumb /></ZoomTrack>
            <ZoomSign>+</ZoomSign>
            <ZoomValue>100%</ZoomValue>
          </ZoomWrap>
        </StatusRight>
      </StatusBar>

      <Dialog>
        <DialogHead>
          <DialogTitle>移动或复制工作表</DialogTitle>
          <HelpMark>?</HelpMark>
          <CloseMark><XMark /></CloseMark>
        </DialogHead>
        <DialogBody>
          <FieldLabel>将选定工作表移至</FieldLabel>
          <FieldLabel $top={4}>工作簿(<U>T</U>):</FieldLabel>
          <BookCombo>
            <BookName>企业年报.xls</BookName>
            <BookArrow><ChevronDown /></BookArrow>
          </BookCombo>
          <FieldLabel $top={4}>下列选定工作表之前(<U>B</U>):</FieldLabel>
          <ListBox>
            <ListItems>
              {SHEETS.map((s, i) => (
                <ListItem key={s} $sel={i === 0} $lit={i === 2}>{s}</ListItem>
              ))}
            </ListItems>
            <ListScroll>
              <ListArrow><ChevronUp /></ListArrow>
              <ListThumb />
              <ListGap />
              <ListArrow><ChevronDown /></ListArrow>
            </ListScroll>
          </ListBox>
          <CheckRow>
            <CheckBox />
            <span>建立副本(<U>C</U>)</span>
          </CheckRow>
          <ButtonRow>
            <DialogButton $primary>确定</DialogButton>
            <DialogButton>取消</DialogButton>
          </ButtonRow>
        </DialogBody>
        <Highlight />
        <StepBadge>5</StepBadge>
      </Dialog>

      <Watermark>酷课堂出品 coolketang.com</Watermark>
    </Window>
  </>
);

export default App;
